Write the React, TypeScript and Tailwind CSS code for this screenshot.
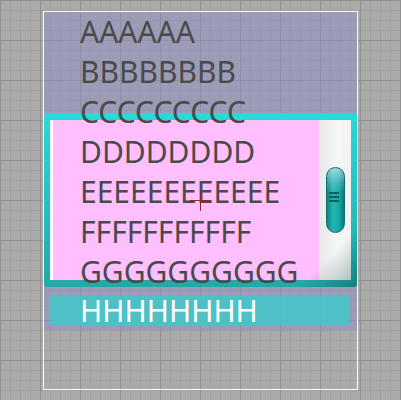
import React from "react";

const LINES = ["AAAAAA", "BBBBBBBB", "CCCCCCCCC", "DDDDDDDD", "EEEEEEEEEEEE", "FFFFFFFFFFF", "GGGGGGGGGG"];

function Thumb() {
  return (
    <div className="relative flex h-[66px] w-[19px] flex-col items-center rounded-full border border-[#0c7070] bg-[linear-gradient(to_bottom,rgba(255,255,255,0.55)_0%,rgba(255,255,255,0.18)_22%,rgba(255,255,255,0)_40%),linear-gradient(to_right,#0e8282,#25b6b6_35%,#19a7a7_70%,#0b7777)] pt-[24px]">
      <div className="flex w-[10px] -translate-x-[1px] flex-col gap-[2px]">
        <div className="h-[2px] bg-[#0a5f5f]" />
        <div className="h-[2px] bg-[#0a5f5f]" />
        <div className="h-[2px] bg-[#0a5f5f]" />
      </div>
    </div>
  );
}

export default function App() {
  return (
    <div className="relative h-[400px] w-[401px] overflow-hidden bg-[#aaaaaa] bg-[linear-gradient(to_right,#909090_1px,transparent_1px),linear-gradient(to_bottom,#909090_1px,transparent_1px),linear-gradient(to_right,#a0a0a0_1px,transparent_1px),linear-gradient(to_bottom,#a0a0a0_1px,transparent_1px)] bg-[size:40px_40px,40px_40px,10px_10px,10px_10px] pt-[11px] pl-[43px] font-['Noto_Sans',sans-serif]">
      <div className="h-[379px] w-[315px] border border-white">
        <div className="relative h-[318px] overflow-hidden bg-[rgba(140,140,200,0.45)]">
          {/* highlighted list frame, sits under the text */}
          <div className="absolute left-0 right-0 top-[101px] flex h-[174px] overflow-hidden rounded-[3px] bg-[linear-gradient(to_bottom,#2ad9d9,#20a9a7)] pt-[7px] pr-[6px] pb-[7px] pl-[6px]">
            <div className="pointer-events-none absolute inset-0 bg-[linear-gradient(135deg,transparent_88%,rgba(0,50,50,0.35)_100%)]" />
            <div className="w-[3px] bg-white" />
            <div className="flex-1 bg-[#ffbefd]" />
            <div className="flex w-[32px] items-center justify-center bg-[linear-gradient(to_right,#e8e8e8,#f7f7f7_60%,#f2f2f2)]">
              <Thumb />
            </div>
          </div>

          <div className="relative z-10 text-[30px] leading-[40px] text-[#4a4a4a]">
            {LINES.map((l) => (
              <div key={l} className="h-[40px] pl-[36px]">
                {l}
              </div>
            ))}
            <div className="h-[40px] pt-[4px] pl-[6px]">
              <div className="h-[30px] w-[300px] bg-[rgba(64,200,200,0.85)] pl-[30px] leading-[30px] text-white">
                HHHHHHHH
              </div>
            </div>
          </div>
        </div>
      </div>

      {/* crosshair marker */}
      <div className="absolute left-[190px] top-[190px] z-20 h-[21px] w-[21px]">
        <div className="absolute left-[10px] top-0 h-[21px] w-px bg-[#8e2a17]" />
        <div className="absolute left-0 top-[10px] h-px w-[21px] bg-[#8e2a17]" />
      </div>
    </div>
  );
}
